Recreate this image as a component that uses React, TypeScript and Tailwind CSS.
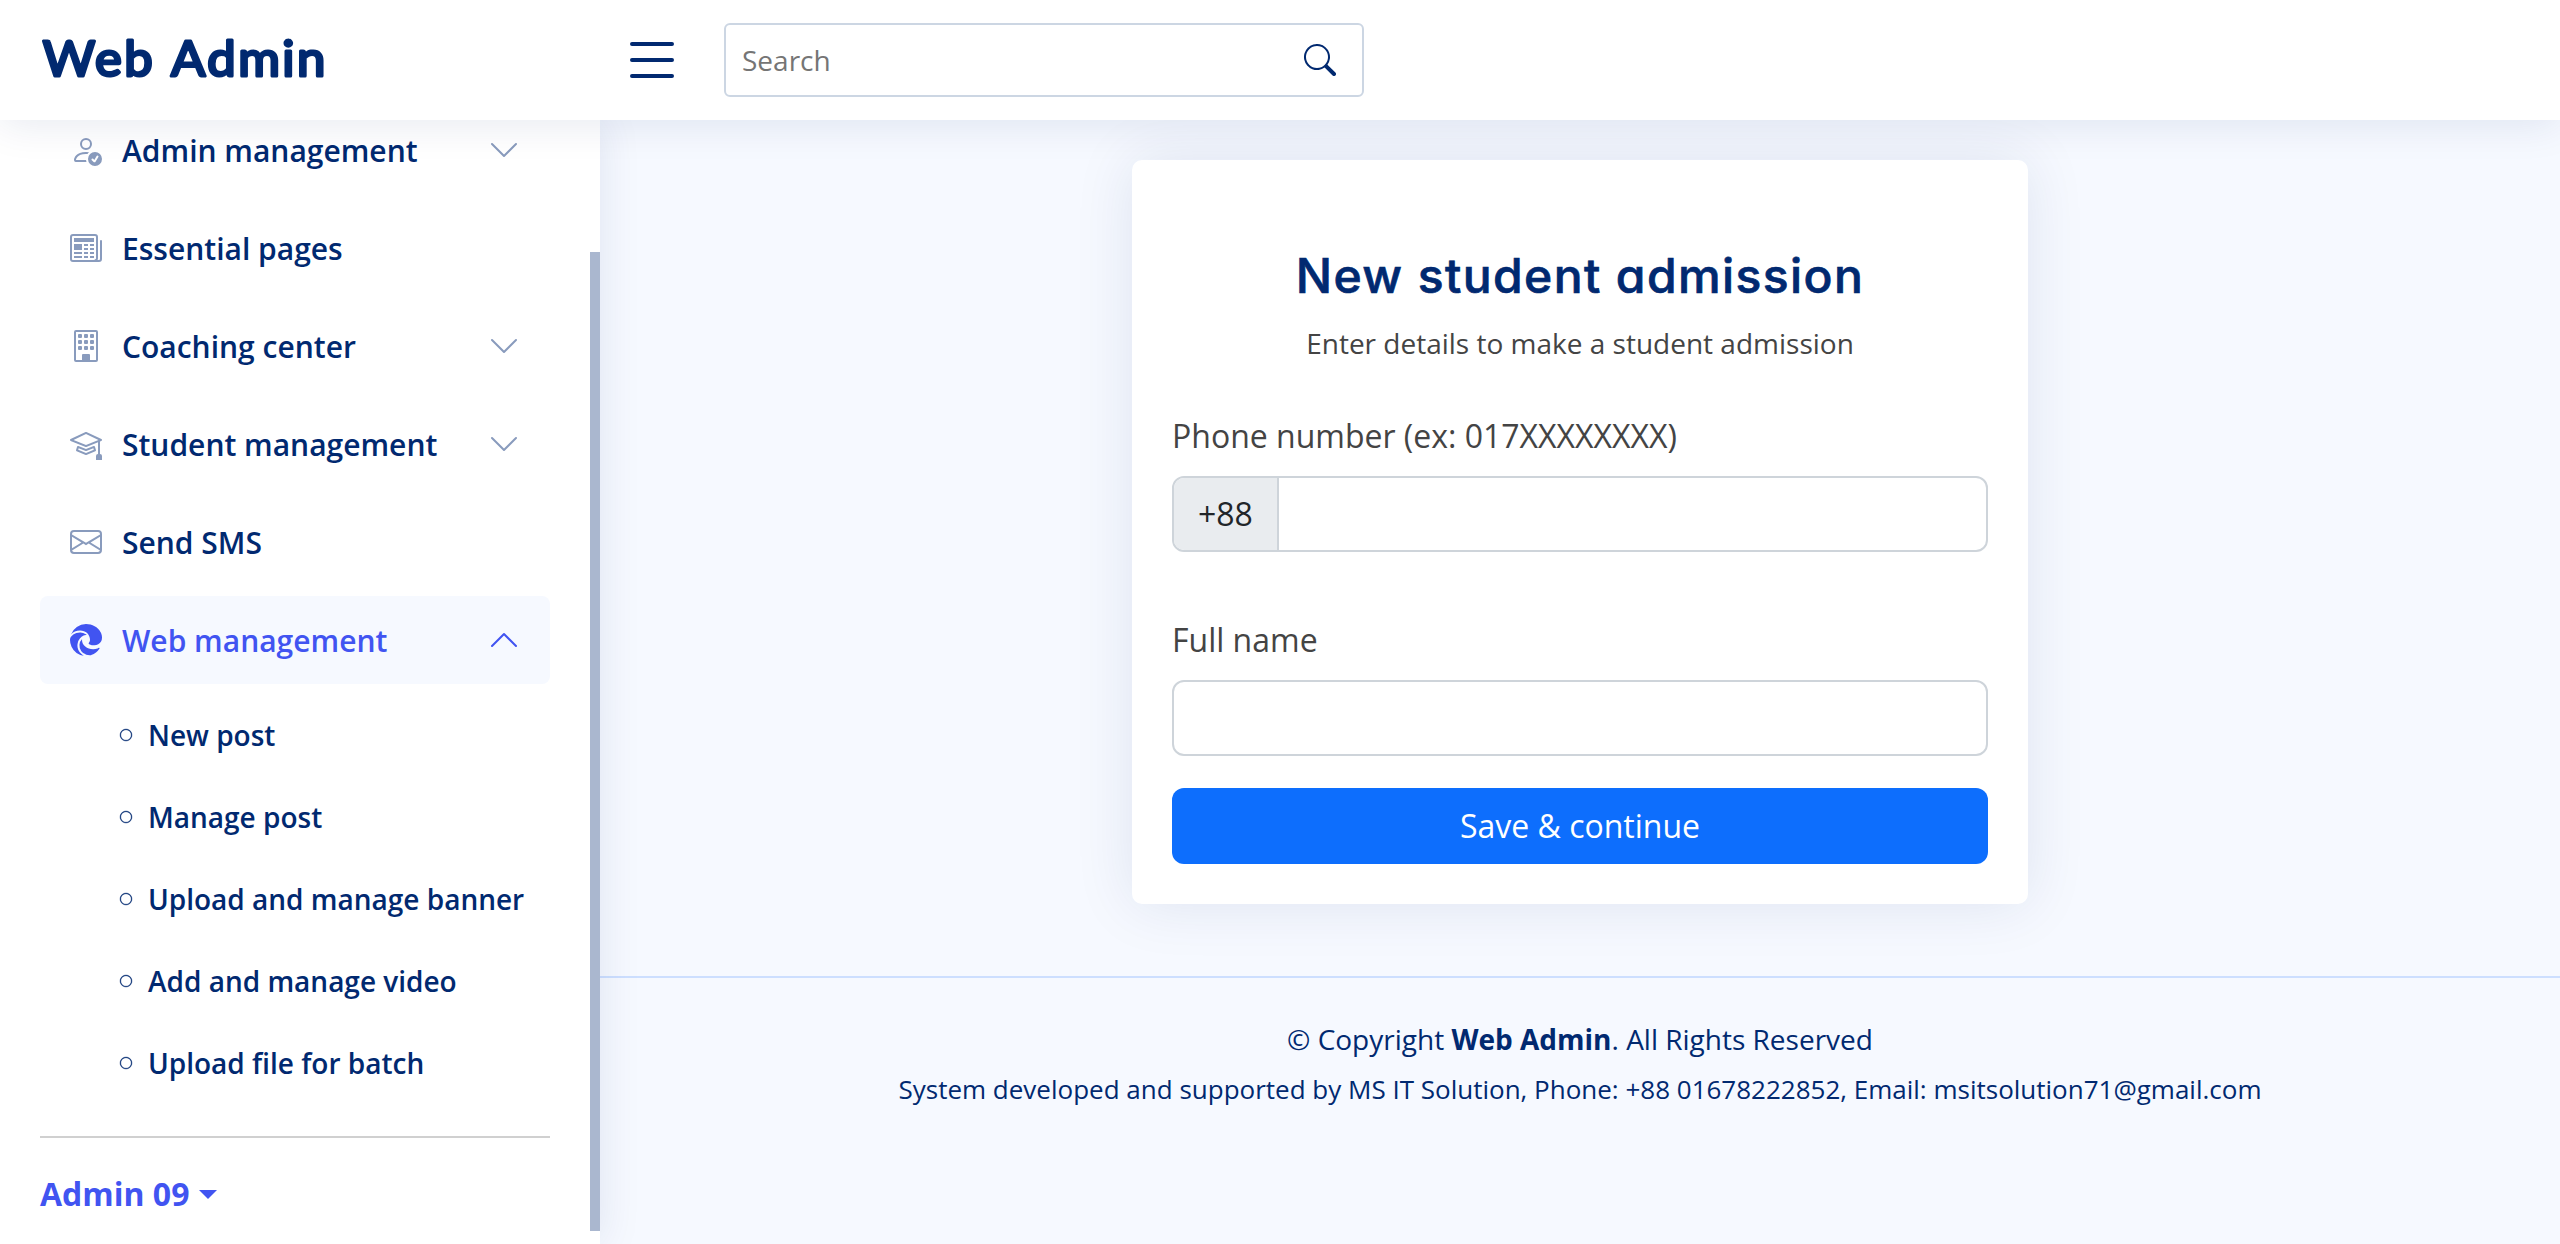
import React from "react";
import {
  BsBrowserEdge,
  BsBuilding,
  BsChevronDown,
  BsChevronUp,
  BsCircle,
  BsEnvelope,
  BsList,
  BsMortarboard,
  BsNewspaper,
  BsPersonCheck,
  BsSearch,
} from "react-icons/bs";
import type { IconType } from "react-icons";

type NavItem = { label: string; icon: IconType; expandable?: boolean; active?: boolean };

const navItems: NavItem[] = [
  { label: "Admin management", icon: BsPersonCheck, expandable: true },
  { label: "Essential pages", icon: BsNewspaper },
  { label: "Coaching center", icon: BsBuilding, expandable: true },
  { label: "Student management", icon: BsMortarboard, expandable: true },
  { label: "Send SMS", icon: BsEnvelope },
  { label: "Web management", icon: BsBrowserEdge, expandable: true, active: true },
];

const subItems = [
  "New post",
  "Manage post",
  "Upload and manage banner",
  "Add and manage video",
  "Upload file for batch",
];

function Header() {
  return (
    <header className="relative z-20 flex h-[120px] shrink-0 items-center bg-white pl-10 shadow-[0_4px_40px_rgba(1,41,112,0.1)]">
      <a className="block w-[560px]" href="#">
        <svg className="block h-[72px] w-[320px] overflow-visible" viewBox="0 0 320 72">
          <text
            x="2.8"
            y="51.8"
            textLength="285"
            lengthAdjust="spacingAndGlyphs"
            className="fill-[#012970] stroke-[#012970] font-['Lato',sans-serif] text-[48.5px] font-normal tracking-[2.4px] [word-spacing:2px]"
            strokeWidth="3"
            strokeLinejoin="round"
          >
            Web Admin
          </text>
        </svg>
      </a>
      <button className="ml-5 text-[#012970]">
        <BsList className="size-16" />
      </button>
      <div className="ml-10 flex h-[74px] w-[640px] items-center justify-between rounded-[6px] border-2 border-[#ccd6e3] pr-[26px] pl-4">
        <input
          className="w-[500px] bg-transparent text-[28px] leading-[42px] outline-none placeholder:text-[#757575]"
          placeholder="Search"
        />
        <BsSearch className="size-8 text-[#012970]" />
      </div>
    </header>
  );
}

function NavRow({ item }: { item: NavItem }) {
  const Icon = item.icon;
  const Chevron = item.active ? BsChevronUp : BsChevronDown;
  return (
    <a
      href="#"
      className={
        item.active
          ? "flex h-[88px] items-center rounded-[8px] bg-[#f6f9ff] px-[30px] text-[30px] font-semibold text-[#4154f1]"
          : "flex h-[88px] items-center rounded-[8px] px-[30px] text-[30px] font-semibold text-[#012970]"
      }
    >
      <Icon className={item.active ? "mr-5 size-8 text-[#4154f1]" : "mr-5 size-8 text-[#899bbd]"} />
      <span>{item.label}</span>
      {item.expandable && (
        <Chevron className={item.active ? "ml-auto size-8 text-[#4154f1]" : "ml-auto size-8 text-[#899bbd]"} />
      )}
    </a>
  );
}

function Sidebar() {
  return (
    <aside className="relative z-10 flex w-[600px] shrink-0 justify-between overflow-visible bg-white pl-10 shadow-[0_0_40px_rgba(1,41,112,0.1)]">
      <div className="-mt-[14px] w-[510px]">
        <nav className="flex flex-col gap-[10px]">
          {navItems.map((item) => (
            <NavRow key={item.label} item={item} />
          ))}
          <ul>
            {subItems.map((label) => (
              <li key={label} className="flex h-[82px] items-center pl-20 text-[28px] font-semibold text-[#012970]">
                <BsCircle className="mr-4 size-3 overflow-visible stroke-[0.5]" />
                {label}
              </li>
            ))}
          </ul>
        </nav>
        <hr className="my-8 border-t-2 border-[#d0d0d0]" />
        <a href="#" className="flex items-center gap-[10px] text-[32px] leading-[48px] font-bold text-[#4154f1]">
          Admin 09
          <svg className="h-[9px] w-[18px]" viewBox="0 0 18 9">
            <path d="M0 0h18L9 9z" fill="currentColor" />
          </svg>
        </a>
      </div>
      <div className="mt-[132px] mb-[13px] w-[10px] bg-[#aab7cf]" />
    </aside>
  );
}

function AdmissionCard() {
  return (
    <section className="mt-10 flex h-[744px] w-[896px] shrink-0 flex-col rounded-[10px] bg-white px-10 pb-10 text-[32px] leading-[48px] text-[#444444] shadow-[0_0_60px_rgba(1,41,112,0.1)]">
      <h5 className="mt-[87px] text-center font-['Inter',sans-serif] text-[48px] leading-[58px] font-medium tracking-[1.4px] text-[#012970] [-webkit-text-stroke:0.7px_#012970] [font-feature-settings:'cv11'] whitespace-nowrap">
        New student admission
      </h5>
      <p className="mt-[17px] text-center text-[28px] leading-[42px]">Enter details to make a student admission</p>
      <label className="mt-auto mb-4">Phone number (ex: 017XXXXXXXX)</label>
      <div className="flex h-[76px] overflow-hidden rounded-[12px] border-2 border-[#ced4da]">
        <span className="flex items-center border-r-2 border-[#ced4da] bg-[#e9ecef] px-6 text-[#212529]">+88</span>
        <input className="min-w-0 flex-1 px-6 outline-none" />
      </div>
      <label className="mt-16 mb-4">Full name</label>
      <input className="h-[76px] shrink-0 rounded-[12px] border-2 border-[#ced4da] px-6 outline-none" />
      <button className="mt-8 h-[76px] shrink-0 rounded-[12px] bg-[#0d6efd] text-white">Save &amp; continue</button>
    </section>
  );
}

function Footer() {
  return (
    <footer className="mt-[72px] w-full border-t-2 border-[#cddfff] pt-10 text-center text-[#012970]">
      <p className="text-[28px] leading-[42px]">
        © Copyright <strong className="font-bold">Web Admin</strong>. All Rights Reserved
      </p>
      <p className="pt-[10px] text-[26px] leading-[39px]">
        System developed and supported by MS IT Solution, Phone: +88 01678222852, Email: msitsolution71@gmail.com
      </p>
    </footer>
  );
}

export default function App() {
  return (
    <div className="flex h-[1244px] w-[2560px] flex-col overflow-hidden bg-[#f6f9ff] font-['Open_Sans',sans-serif]">
      <Header />
      <div className="flex min-h-0 flex-1">
        <Sidebar />
        <main className="flex flex-1 flex-col items-center">
          <AdmissionCard />
          <Footer />
        </main>
      </div>
    </div>
  );
}
